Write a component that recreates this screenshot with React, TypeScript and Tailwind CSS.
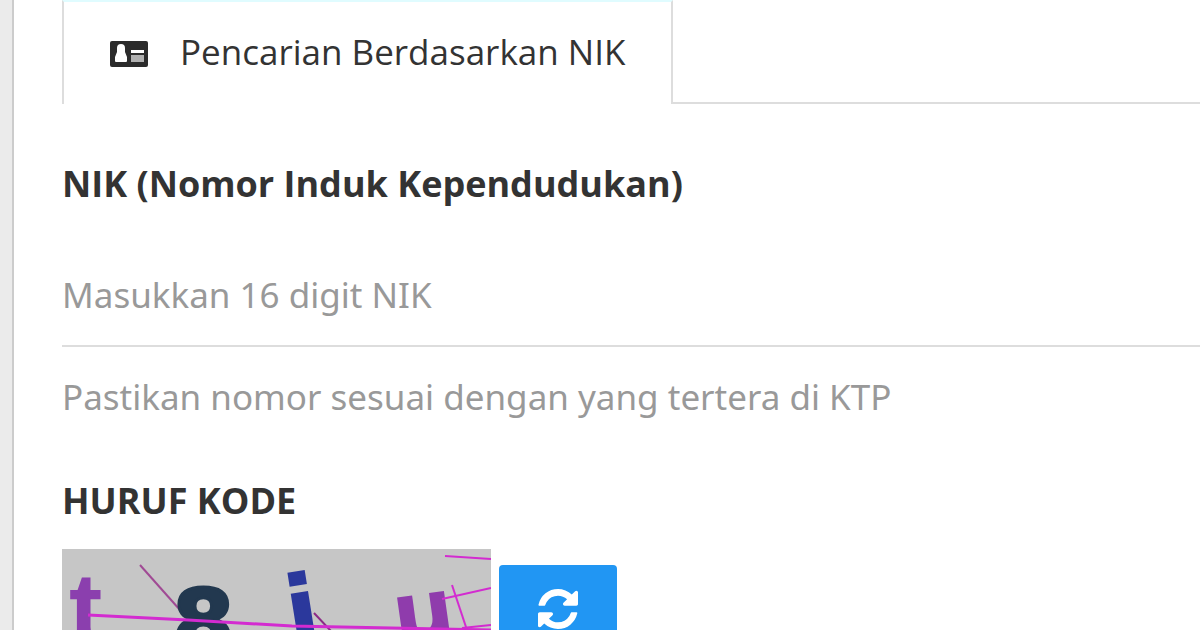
import React from "react";

const CaptchaImage = () => (
	<svg
		role="img"
		aria-label="Captcha"
		width="429"
		height="120"
		viewBox="0 0 429 120"
		className="shrink-0 bg-[#c6c6c6]"
		fontFamily="DejaVu Sans, sans-serif"
		fontWeight="bold">
		<path d="M78 16L126 70" stroke="#a04a94" strokeWidth="2" />
		<path d="M252 64L284 98" stroke="#8c2a86" strokeWidth="2" />
		<text x="7" y="94" fontSize="100" fontFamily="Liberation Sans, sans-serif" fill="#8b3fae">
			t
		</text>
		<text
			x="110"
			y="106"
			fontSize="90"
			fill="#22384f"
			stroke="#22384f"
			strokeWidth="3">
			8
		</text>
		<text x="229" y="100" fontSize="100" fill="#2b389c" transform="rotate(-9 229 100)">
			i
		</text>
		<text x="335" y="96" fontSize="86" fill="#8f3cac" transform="rotate(-8 335 96)">
			u
		</text>
		<g fill="none" stroke="#d32bd0" strokeWidth="2">
			<path d="M26 66L126 71L230 77L429 81" strokeWidth="3" />
			<path d="M383 7L429 10" />
			<path d="M380 50L429 39" />
			<path d="M390 36L406 84" />
			<path d="M400 79L429 76" />
		</g>
	</svg>
);

const IdCardIcon = () => (
	<svg
		width="38"
		height="26"
		viewBox="0 0 38 26"
		className="mt-1"
		aria-hidden="true">
		<rect width="38" height="26" rx="2" fill="#2b2b2b" />
		<path
			d="M7 7q0-4 4-4t4 4v4l2 5v4q0 1-1 1H6q-1 0-1-1v-4l2-5z"
			fill="#ffffff"
		/>
		<path d="M21 9h13v3H21z" fill="#ffffff" />
		<path d="M21 14h13v7H21z" fill="#b0b0b0" />
	</svg>
);

const RefreshIcon = () => (
	<svg
		width="40"
		height="40"
		viewBox="0 0 1536 1536"
		fill="currentColor"
		aria-hidden="true">
		<path d="M1511 928q0 5-1 7-64 268-268 434.500T764 1536q-146 0-282.500-55T238 1324l-129 129q-19 19-45 19t-45-19-19-45V960q0-26 19-45t45-19h448q26 0 45 19t19 45-19 45l-137 137q71 66 161 102t187 36q134 0 250-65t186-179q11-17 53-117 8-23 30-23h192q13 0 22.500 9.500t9.500 22.500zm25-800v448q0 26-19 45t-45 19h-448q-26 0-45-19t-19-45 19-45l138-138Q969 256 768 256q-134 0-250 65T332 500q-11 17-53 117-8 23-30 23H50q-13 0-22.500-9.500T18 608v-7q65-268 270-434.500T768 0q146 0 284 55.500T1297 212l130-129q19-19 45-19t45 19 19 45z" />
	</svg>
);

const App = () => {
	return (
		<div className="flex h-screen overflow-hidden bg-[#ebebeb] pl-3 font-['Open_Sans',sans-serif] text-4xl text-[#333333]">
			<main className="min-w-0 grow border-l-2 border-[#cccccc] bg-white pl-12">
				{/* Tabs */}
				<div role="tablist" className="flex">
					<button
						type="button"
						role="tab"
						aria-selected="true"
						className="flex h-[104px] shrink-0 items-center gap-8 border-x-2 border-t-2 border-x-[#dddddd] border-t-[#e0fcff] px-[46px] pb-0.5 text-[35px] whitespace-nowrap">
						<IdCardIcon />
						Pencarian Berdasarkan NIK
					</button>
					<div className="grow border-b-2 border-[#dddddd]" />
				</div>

				<form>
					<label
						htmlFor="nik"
						className="mt-14 block leading-[48px] font-bold whitespace-nowrap">
						NIK (Nomor Induk Kependudukan)
					</label>
					<input
						id="nik"
						type="text"
						maxLength={16}
						placeholder="Masukkan 16 digit NIK"
						aria-describedby="nik-help"
						className="mt-9 block h-[103px] w-full border-b-2 border-[#dddddd] font-['Noto_Sans',sans-serif] text-[35px] placeholder:text-[#999999] focus:outline-none"
					/>
					<p
						id="nik-help"
						className="mt-[26px] font-['Noto_Sans',sans-serif] text-[35px] leading-[48px] whitespace-nowrap text-[#999999]">
						Pastikan nomor sesuai dengan yang tertera di KTP
					</p>

					<h2 className="mt-14 leading-[48px] font-bold">HURUF KODE</h2>
					<div className="mt-6 flex items-center gap-2">
						<CaptchaImage />
						<button
							type="button"
							aria-label="Refresh"
							className="flex h-[88px] w-[118px] items-center justify-center rounded bg-[#2196f3] text-white">
							<RefreshIcon />
						</button>
					</div>
				</form>
			</main>
		</div>
	);
};

export default App;
